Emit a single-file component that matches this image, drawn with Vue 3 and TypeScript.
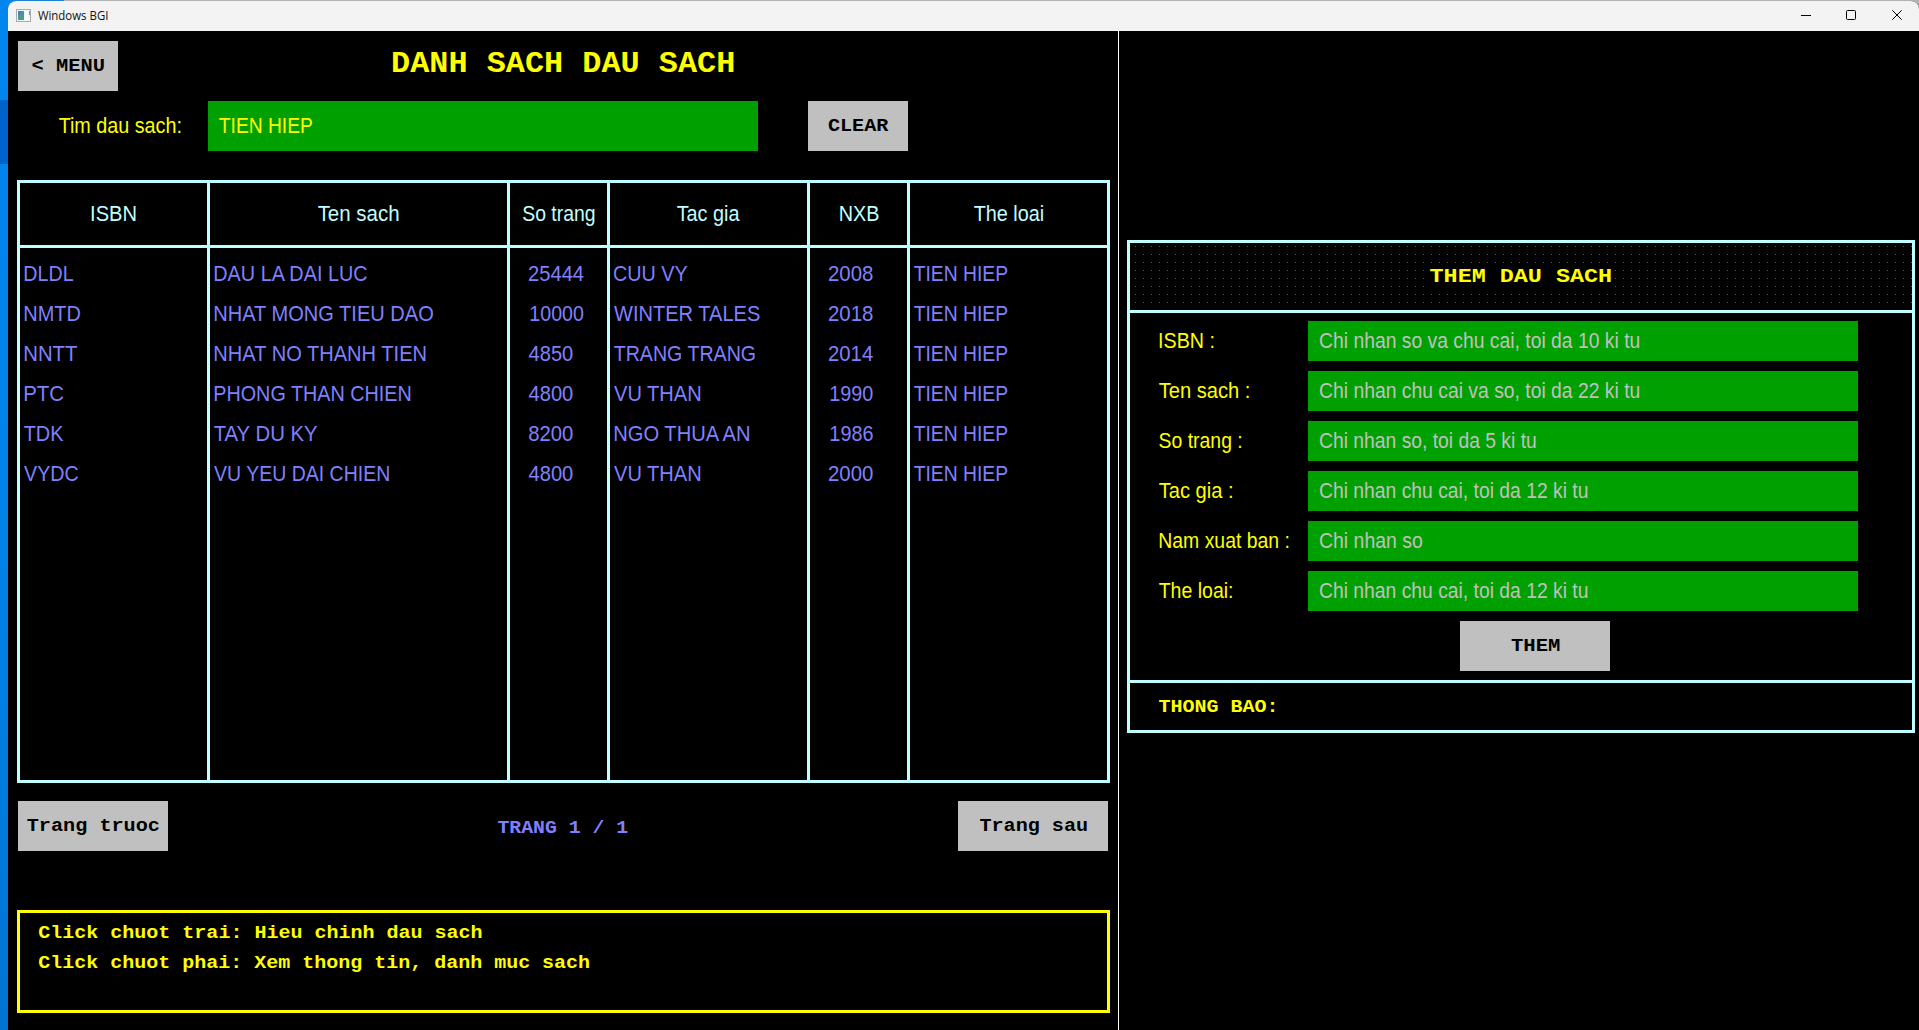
<script setup lang="ts">
import { h } from 'vue'

type Kind = 'sans' | 'mono' | 'form-title' | 'title' | 'caption'

const fonts: Record<Kind, { weight: number; size: number; family: string }> = {
  sans: { weight: 400, size: 22, family: '"Liberation Sans", Arial, sans-serif' },
  mono: { weight: 700, size: 18, family: '"Liberation Mono", "Courier New", monospace' },
  'form-title': { weight: 700, size: 21, family: '"Liberation Mono", "Courier New", monospace' },
  title: { weight: 700, size: 29, family: '"Liberation Mono", "Courier New", monospace' },
  caption: { weight: 400, size: 12, family: '"Open Sans", "Noto Sans", sans-serif' },
}

const ctx = document.createElement('canvas').getContext('2d')!

// Stroke-font label: glyphs are stretched so that the drawn text is exactly `w` pixels wide.
const Label = (p: { t: string; w: number; kind?: Kind; dx?: number }) => {
  const kind = p.kind ?? 'sans'
  const f = fonts[kind]
  // Measured at ten times the size, since the ink box is rounded to whole pixels.
  ctx.font = `${f.weight} ${f.size * 10}px ${f.family}`
  const m = ctx.measureText(p.t)
  const left = m.actualBoundingBoxLeft / 10
  // Hinting pulls a leading vertical stem to the left by about a pixel.
  const stem = kind === 'sans' && /^[BDEFHIKLMNPR]/.test(p.t) ? 0.9 : 0
  const scale = (p.w - stem) / (m.actualBoundingBoxRight / 10 + left)
  const shift = left * scale + stem + (p.dx ?? 0)
  return h(
    'span',
    { style: { display: 'block', width: p.w + 'px', whiteSpace: 'pre', textAlign: 'left', flex: 'none' } },
    [
      h(
        'span',
        {
          style: {
            display: 'inline-block',
            font: `${f.weight} ${f.size}px ${f.family}`,
            lineHeight: 'inherit',
            verticalAlign: 'top',
            transformOrigin: '0 50%',
            transform: `translateX(${shift}px) scaleX(${scale})`,
          },
        },
        p.t,
      ),
    ],
  )
}
Label.props = ['t', 'w', 'kind', 'dx']

interface Cell { t: string; w: number; dx?: number }
interface Column { head: Cell; pad: number; cells: Cell[] }

const columns: Column[] = [
  {
    head: { t: 'ISBN', w: 44.4 },
    pad: 4,
    cells: [
      { t: 'DLDL', w: 49 }, { t: 'NMTD', w: 56 }, { t: 'NNTT', w: 53 },
      { t: 'PTC', w: 39.3 }, { t: 'TDK', w: 39.3 }, { t: 'VYDC', w: 54 },
    ],
  },
  {
    head: { t: 'Ten sach', w: 80.3 },
    pad: 4,
    cells: [
      { t: 'DAU LA DAI LUC', w: 154 }, { t: 'NHAT MONG TIEU DAO', w: 219.6 },
      { t: 'NHAT NO THANH TIEN', w: 212.5 }, { t: 'PHONG THAN CHIEN', w: 196.4 },
      { t: 'TAY DU KY', w: 103.6 }, { t: 'VU YEU DAI CHIEN', w: 175 },
    ],
  },
  {
    head: { t: 'So trang', w: 71.4 },
    pad: 18.5,
    cells: [
      { t: '25444', w: 54.5 }, { t: '10000', w: 52.4, dx: 1.8 }, { t: '4850', w: 43.5 },
      { t: '4800', w: 43.5 }, { t: '8200', w: 43.5 }, { t: '4800', w: 43.5 },
    ],
  },
  {
    head: { t: 'Tac gia', w: 62.5 },
    pad: 4.3,
    cells: [
      { t: 'CUU VY', w: 73.3 }, { t: 'WINTER TALES', w: 145.8 }, { t: 'TRANG TRANG', w: 141 },
      { t: 'VU THAN', w: 86.4 }, { t: 'NGO THUA AN', w: 137.5 }, { t: 'VU THAN', w: 86.4 },
    ],
  },
  {
    head: { t: 'NXB', w: 39, dx: 0.4 },
    pad: 18.5,
    cells: [
      { t: '2008', w: 43.6 }, { t: '2018', w: 43.6 }, { t: '2014', w: 43.6 },
      { t: '1990', w: 41.8, dx: 1.8 }, { t: '1986', w: 41.8, dx: 1.8 }, { t: '2000', w: 43.6 },
    ],
  },
  {
    head: { t: 'The loai', w: 69 },
    pad: 4,
    cells: Array.from({ length: 6 }, () => ({ t: 'TIEN HIEP', w: 93.2 })),
  },
]

const fields: { label: Cell; hint: Cell }[] = [
  { label: { t: 'ISBN :', w: 54.2 }, hint: { t: 'Chi nhan so va chu cai, toi da 10 ki tu', w: 319 } },
  { label: { t: 'Ten sach :', w: 89.6 }, hint: { t: 'Chi nhan chu cai va so, toi da 22 ki tu', w: 319 } },
  { label: { t: 'So trang :', w: 81.6, dx: 0.4 }, hint: { t: 'Chi nhan so, toi da 5 ki tu', w: 215.5 } },
  { label: { t: 'Tac gia :', w: 72.8 }, hint: { t: 'Chi nhan chu cai, toi da 12 ki tu', w: 267.2 } },
  { label: { t: 'Nam xuat ban :', w: 129.2 }, hint: { t: 'Chi nhan so', w: 102 } },
  { label: { t: 'The loai:', w: 72.8 }, hint: { t: 'Chi nhan chu cai, toi da 12 ki tu', w: 267.2 } },
]
</script>

<template>
  <div class="desktop">
    <div class="strip"><div class="strip-mark"></div></div>
    <div class="window">
      <header class="titlebar">
        <svg class="app-icon" width="16" height="14" viewBox="0 0 16 14">
          <rect x="0.5" y="0.5" width="14" height="12" fill="#f4f7f8" stroke="#a3acb3" />
          <rect x="2" y="2" width="6" height="9" fill="#4a9a90" />
          <rect x="2" y="2" width="3" height="4" fill="#4a86a8" />
          <rect x="9" y="2" width="3" height="9" fill="#ffffff" />
          <rect x="13" y="2" width="1" height="4" fill="#5fa59c" />
        </svg>
        <Label class="app-name" t="Windows BGI" :w="69.3" kind="caption" />
        <svg class="controls" width="104" height="12" viewBox="0 0 104 12" fill="none" stroke="#000">
          <path d="M1 6.5H11" />
          <rect x="46.5" y="1.5" width="9" height="9" rx="1" />
          <path d="M92.3 1.3L101.7 10.7M101.7 1.3L92.3 10.7" />
        </svg>
      </header>

      <div class="canvas">
        <main class="list-pane">
          <div class="top">
            <button class="btn"><Label t="< MENU" :w="71.3" kind="mono" :dx="0.4" /></button>
            <h1><Label t="DANH SACH DAU SACH" :w="340.6" kind="title" /></h1>
          </div>

          <div class="search">
            <div class="search-label"><Label t="Tim dau sach:" :w="121.2" /></div>
            <div class="input search-input"><Label t="TIEN HIEP" :w="92.7" :dx="-0.8" /></div>
            <button class="btn"><Label t="CLEAR" :w="59.6" kind="mono" :dx="0.7" /></button>
          </div>

          <section class="table">
            <div v-for="(c, i) in columns" :key="i" class="col">
              <div class="head"><Label v-bind="c.head" /></div>
              <div class="cells" :style="{ paddingLeft: c.pad + 'px' }">
                <div v-for="(cell, j) in c.cells" :key="j" class="cell"><Label v-bind="cell" /></div>
              </div>
            </div>
          </section>

          <div class="pager">
            <button class="btn wide"><Label t="Trang truoc" :w="131.5" kind="mono" :dx="0.3" /></button>
            <div class="page"><Label t="TRANG 1 / 1" :w="129.4" kind="mono" /></div>
            <button class="btn wide"><Label t="Trang sau" :w="106.7" kind="mono" /></button>
          </div>

          <footer class="notes">
            <Label t="Click chuot trai: Hieu chinh dau sach" :w="442.5" kind="mono" />
            <Label t="Click chuot phai: Xem thong tin, danh muc sach" :w="550" kind="mono" />
          </footer>
        </main>

        <aside class="form-pane">
          <section class="form">
            <div class="form-head">
              <div class="form-title"><Label t="THEM DAU SACH" :w="180.4" kind="form-title" :dx="-0.8" /></div>
            </div>
            <div class="form-body">
              <div v-for="(f, i) in fields" :key="i" class="field">
                <div class="field-label"><Label v-bind="f.label" /></div>
                <div class="input hint"><Label v-bind="f.hint" /></div>
              </div>
              <button class="btn wide submit"><Label t="THEM" :w="48" kind="mono" :dx="0.5" /></button>
            </div>
            <div class="message"><Label t="THONG BAO:" :w="115" kind="mono" /></div>
          </section>
        </aside>
      </div>
    </div>
  </div>
</template>

<style>
html,
body {
  margin: 0;
  overflow: hidden;
  background: #000;
}
</style>

<style scoped>
.desktop {
  display: flex;
  width: 1919px;
  height: 1030px;
  background: linear-gradient(90deg, #1a80d4 64px, #b2b0b1 64px) 0 0 / 100% 12px no-repeat;
}
.strip {
  flex: 0 0 16px;
  height: 1030px;
  margin-right: -8px;
  background: linear-gradient(#0086ee, #0083e8 50%, #0074d4);
}
.strip-mark {
  width: 8px;
  height: 64px;
  margin-top: 100px;
  background: #0063cb;
}
.window {
  flex: 1;
  margin-top: 1px;
  display: flex;
  flex-direction: column;
  border-radius: 8px 8px 0 0;
  overflow: hidden;
  background: #000;
}
.titlebar {
  display: flex;
  align-items: flex-start;
  height: 30px;
  background: #f3f3f3;
}
.app-icon {
  margin: 8px 6px 0 8px;
}
.app-name {
  line-height: 30px;
  color: #111;
}
.controls {
  margin: 8px 15px 0 auto;
}
.canvas {
  flex: 1;
  display: flex;
}
.list-pane {
  width: 1110px;
  border-right: 1px solid #fff;
}
.btn {
  display: flex;
  justify-content: center;
  width: 100px;
  height: 50px;
  padding: 0;
  border: 0;
  background: #c0c0c0;
  color: #000;
  line-height: 50px;
}
.btn.wide {
  width: 150px;
}
.top {
  display: grid;
  grid-template-columns: 100px 1fr 100px;
  height: 60px;
  padding: 10px 10px 0;
  box-sizing: border-box;
}
h1 {
  display: flex;
  justify-content: center;
  margin: 0;
  line-height: 48px;
  color: #ff0;
}
.search {
  display: flex;
  height: 50px;
  margin-top: 10px;
  line-height: 50px;
  color: #ff0;
}
.search-label {
  width: 149px;
  padding-left: 51px;
}
.input {
  width: 550px;
  padding-left: 11.5px;
  box-sizing: border-box;
  background: #00a000;
}
.search-input {
  margin-right: 50px;
}
.table {
  display: grid;
  grid-template-columns: 190px 300px 100px 200px 100px 197px;
  width: 1093px;
  height: 603px;
  margin: 29px 0 0 9px;
  box-sizing: border-box;
  border: 3px solid #c0ffff;
}
.col + .col {
  border-left: 3px solid #c0ffff;
  margin-left: -3px;
}
.head {
  display: flex;
  justify-content: center;
  height: 62px;
  padding-right: 3px;
  border-bottom: 3px solid #c0ffff;
  line-height: 62px;
  color: #c0ffff;
}
.col:last-child .head {
  padding-right: 0;
}
.cells {
  padding-top: 6px;
  color: #8080ff;
}
.cell {
  height: 40px;
  line-height: 40px;
}
.pager {
  display: flex;
  justify-content: space-between;
  margin: 18px 10px 0;
}
.page {
  line-height: 54px;
  height: 50px;
  padding-right: 1px;
  color: #8080ff;
}
.notes {
  width: 1093px;
  height: 103px;
  margin: 59px 0 0 9px;
  padding: 5px 0 0 18.6px;
  box-sizing: border-box;
  border: 3px solid #ff0;
  line-height: 30px;
  color: #ff0;
}
.form-pane {
  flex: 1;
  padding: 209px 4px 0 8px;
}
.form {
  height: 493px;
  box-sizing: border-box;
  border: 3px solid #c0ffff;
}
.form-head {
  display: flex;
  justify-content: center;
  align-items: center;
  height: 67px;
  border-bottom: 3px solid #c0ffff;
  background: conic-gradient(at 1px 1px, #000 0 75%, #00a000 0) 5px 3px / 8px 8px;
  color: #ff0;
}
.form-title {
  padding: 0 4px;
  background: #000;
  line-height: 28px;
}
.form-body {
  height: 359px;
  padding: 8px 54px 0 29px;
  border-bottom: 3px solid #c0ffff;
}
.field {
  display: flex;
  justify-content: space-between;
  height: 40px;
  margin-bottom: 10px;
  line-height: 40px;
  color: #ff0;
}
.hint {
  color: #c0c0c0;
}
.submit {
  margin-left: 301px;
}
.message {
  padding-left: 29px;
  line-height: 48px;
  color: #ff0;
}
</style>
